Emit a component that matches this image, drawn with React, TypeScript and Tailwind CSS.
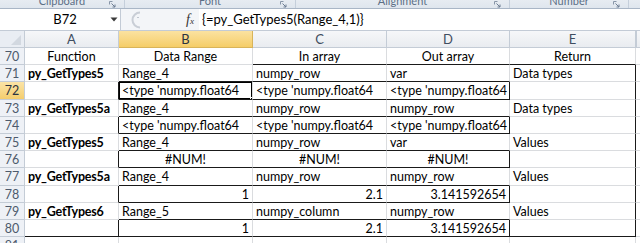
import React from "react";

type Cell = { t?: string; b?: boolean; a?: "l" | "c" | "r" };
type Row = { n: number; cells: Cell[]; boxed?: boolean };

const F = "<type 'numpy.float64";

const rows: Row[] = [
  {
    n: 70,
    cells: [
      { t: "Function", a: "c" },
      { t: "Data Range", a: "c" },
      { t: "In array", a: "c" },
      { t: "Out array", a: "c" },
      { t: "Return", a: "c" },
    ],
  },
  { n: 71, cells: [{ t: "py_GetTypes5", b: true }, { t: "Range_4" }, { t: "numpy_row" }, { t: "var" }, { t: "Data types" }] },
  { n: 72, boxed: true, cells: [{}, { t: F }, { t: F }, { t: F }, {}] },
  { n: 73, cells: [{ t: "py_GetTypes5a", b: true }, { t: "Range_4" }, { t: "numpy_row" }, { t: "numpy_row" }, { t: "Data types" }] },
  { n: 74, boxed: true, cells: [{}, { t: F }, { t: F }, { t: F }, {}] },
  { n: 75, cells: [{ t: "py_GetTypes5", b: true }, { t: "Range_4" }, { t: "numpy_row" }, { t: "var" }, { t: "Values" }] },
  { n: 76, boxed: true, cells: [{}, { t: "#NUM!", a: "c" }, { t: "#NUM!", a: "c" }, { t: "#NUM!", a: "c" }, {}] },
  { n: 77, cells: [{ t: "py_GetTypes5a", b: true }, { t: "Range_4" }, { t: "numpy_row" }, { t: "numpy_row" }, { t: "Values" }] },
  { n: 78, boxed: true, cells: [{}, { t: "1", a: "r" }, { t: "2.1", a: "r" }, { t: "3.141592654", a: "r" }, {}] },
  { n: 79, cells: [{ t: "py_GetTypes6", b: true }, { t: "Range_5" }, { t: "numpy_column" }, { t: "numpy_row" }, { t: "Values" }] },
  { n: 80, boxed: true, cells: [{}, { t: "1", a: "r" }, { t: "2.1", a: "r" }, { t: "3.141592654", a: "r" }, {}] },
  { n: 81, cells: [{}, {}, {}, {}, {}] },
];

const grid = "grid grid-cols-[25px_94px_134px_134px_123px_126px_1fr]";

function Launcher() {
  return (
    <svg width="7" height="7" viewBox="0 0 7 7" className="shrink-0">
      <path d="M0.5 0.5h3M0.5 0.5v3" stroke="#8896a8" strokeWidth="1" fill="none" />
      <path d="M2.5 2.5l3.5 3.5M6 3.5v2.5h-2.5" stroke="#6d7d92" strokeWidth="1" fill="none" />
    </svg>
  );
}

function Group({ label, w }: { label: string; w: string }) {
  return (
    <div className={`${w} h-full relative flex items-start justify-center border-r border-[#c5cfdb]`}>
      <span className="mt-[-6px] text-[11px] leading-[14px] text-[#5c6f86]">{label}</span>
      <div className="absolute right-[8px] top-[1px]">
        <Launcher />
      </div>
    </div>
  );
}

function DataRow({ row, i }: { row: Row; i: number }) {
  const next = rows[i + 1];
  const active = row.n === 72;
  return (
    <>
      <div
        className={`flex items-center justify-center pt-[1px] text-[12.5px] leading-[15px] border-r border-b border-[#c4ccd6] ${
          active ? "bg-gradient-to-b from-[#fbe4a6] to-[#f4cd6c] text-[#2c3440]" : "bg-[#eef1f6] text-[#4d5a6c]"
        }`}
      >
        {row.n}
      </div>
      {row.cells.map((c, ci) => {
        const mid = ci >= 1 && ci <= 3;
        const darkB =
          (row.boxed && mid) ||
          (next?.boxed && mid) ||
          (row.n === 80 && ci <= 4) ||
          (row.n === 70 && ci >= 2);
        const darkR = (row.boxed && (ci === 0 || ci === 3)) || (ci === 4 && row.n >= 71 && row.n <= 80);
        const align = c.a === "c" ? "justify-center" : c.a === "r" ? "justify-end" : "justify-start";
        return (
          <div
            key={ci}
            className={`relative flex items-center pt-[1px] ${align} px-[3px] overflow-hidden whitespace-nowrap text-[12.5px] leading-[15px] text-black border-b border-r ${
              darkB ? "border-b-[#1a1a1a]" : "border-b-[#dadcdf]"
            } ${darkR ? "border-r-[#1a1a1a]" : "border-r-[#dadcdf]"} ${c.b ? "font-bold tracking-[-0.2px]" : ""}`}
          >
            {c.t}
            {active && ci === 1 && (
              <>
                <div className="absolute inset-[-1px] border-2 border-black" />
                <div className="absolute right-[-3px] bottom-[-3px] w-[5px] h-[5px] bg-black border border-white" />
              </>
            )}
          </div>
        );
      })}
      <div className="border-b border-[#dadcdf]" />
    </>
  );
}

export default function App() {
  return (
    <div className="w-[640px] h-[243px] overflow-hidden bg-white font-['Lato','Liberation_Sans',sans-serif]">
      {/* ribbon group labels, cut off at the top */}
      <div className="h-[9px] flex overflow-hidden bg-gradient-to-b from-[#e7ecf2] to-[#dfe6ee] border-b border-[#a9b6c6]">
        <Group label="Clipboard" w="w-[125px]" />
        <Group label="Font" w="w-[171px]" />
        <Group label="Alignment" w="w-[214px]" />
        <Group label="Number" w="w-[119px]" />
        <div className="flex-1" />
      </div>

      {/* formula bar */}
      <div className="h-[22px] flex items-stretch bg-[#f3f5f8] border-b border-[#c3cbd6]">
        <div className="w-[121px] flex items-center bg-white border-r border-[#c3cbd6] relative">
          <span className="flex-1 text-center text-[13px] text-black pl-[20px]">B72</span>
          <svg width="8" height="5" viewBox="0 0 8 5" className="mr-[2px]">
            <path d="M0.5 0.5h7L4 4.5z" fill="#3a3a3a" />
          </svg>
        </div>
        <div className="w-[60px] flex items-center pl-[7px]">
          <svg width="22" height="18" viewBox="0 0 22 18">
            <path d="M12 1.5A7.5 7.5 0 0 0 12 16.5" stroke="#c9ced6" strokeWidth="2" fill="none" />
            <path d="M9 6.5h2" stroke="#c0c6cf" strokeWidth="1" />
          </svg>
        </div>
        <div className="w-[18px] flex items-center justify-center">
          <span className="font-['Liberation_Serif',serif] italic text-[14px] text-[#333] leading-none">
            f<span className="text-[9px]">x</span>
          </span>
        </div>
        <div className="flex-1 flex items-center bg-white pl-[3px] text-[13px] text-black whitespace-nowrap">
          {"{=py_GetTypes5(Range_4,1)}"}
        </div>
      </div>

      {/* column headers */}
      <div className={`${grid} h-[17px]`}>
        <div className="relative bg-[#e9edf3] border-r border-b border-[#c4ccd6]">
          <svg width="10" height="10" viewBox="0 0 10 10" className="absolute right-[3px] bottom-[2px]">
            <path d="M10 0V10H0z" fill="#d2d8e0" />
          </svg>
        </div>
        {["A", "B", "C", "D", "E"].map((h) => (
          <div
            key={h}
            className={`flex items-center justify-center text-[13px] leading-[15px] border-r border-b ${
              h === "B"
                ? "bg-gradient-to-b from-[#fbe2a0] to-[#f5cd67] border-[#d8b45a] text-[#2c3440]"
                : "bg-gradient-to-b from-[#f6f7f9] to-[#e9ecf0] border-[#c4ccd6] text-[#3f4d60]"
            }`}
          >
            {h}
          </div>
        ))}
        <div className="bg-gradient-to-b from-[#f6f7f9] to-[#e9ecf0] border-b border-l border-[#c4ccd6]" />
      </div>

      {/* cells */}
      <div className={`${grid} auto-rows-[17.2px]`}>
        {rows.map((r, i) => (
          <DataRow key={r.n} row={r} i={i} />
        ))}
      </div>
    </div>
  );
}
